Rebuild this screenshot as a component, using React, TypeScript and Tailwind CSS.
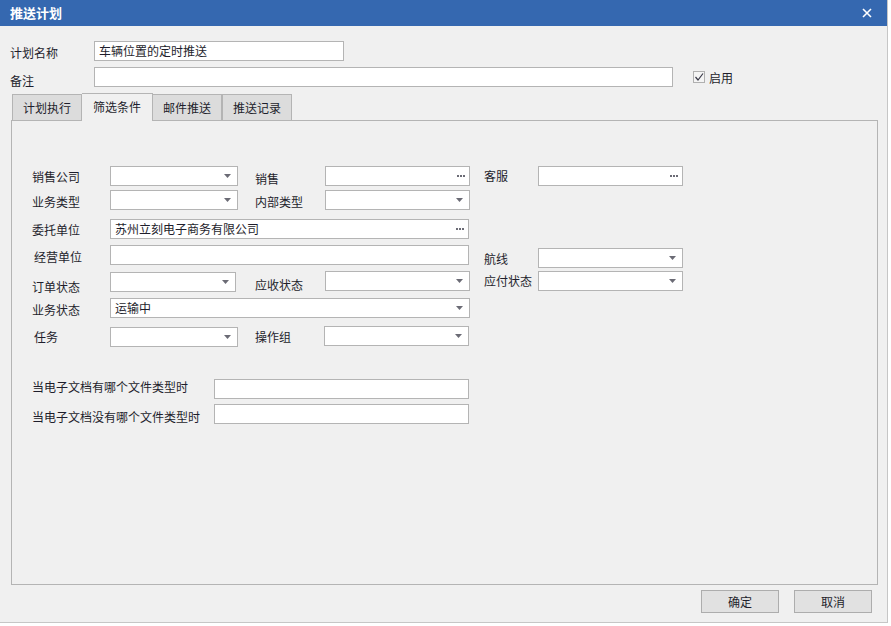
import React from "react";

const FONT = { fontFamily: '"Microsoft YaHei", "Noto Sans CJK SC", "Noto Sans", sans-serif' };

function Arrow() {
  return (
    <svg width="7" height="4" viewBox="0 0 7 4" className="ml-auto mr-[6px] shrink-0">
      <path d="M0 0 H7 L3.5 4 Z" fill="#6b6b75" />
    </svg>
  );
}

function Dots() {
  return (
    <svg width="8" height="2" viewBox="0 0 8 2" className="ml-auto mr-[4px] shrink-0">
      <rect x="0" y="0" width="2" height="2" fill="#6b6b75" />
      <rect x="3" y="0" width="2" height="2" fill="#6b6b75" />
      <rect x="6" y="0" width="2" height="2" fill="#6b6b75" />
    </svg>
  );
}

type BoxProps = { w: string; kind?: "arrow" | "dots" | "none"; text?: string; extra?: string };

function Box({ w, kind = "none", text, extra = "" }: BoxProps) {
  return (
    <div
      className={`${w} h-[20px] bg-white border border-[#b4b4b4] flex items-center shrink-0 ${extra}`}
    >
      {text ? (
        <span className="pl-[4px] text-[12px] leading-[16px] text-[#1e1e2c] whitespace-nowrap">{text}</span>
      ) : null}
      {kind === "arrow" ? <Arrow /> : kind === "dots" ? <Dots /> : null}
    </div>
  );
}

function L({ w, children, extra = "" }: { w: string; children: React.ReactNode; extra?: string }) {
  return (
    <div className={`${w} shrink-0 text-[12px] leading-[16px] text-[#1e1e2c] whitespace-nowrap ${extra}`}>
      {children}
    </div>
  );
}

export default function App() {
  return (
    <div className="w-[891px] h-[626px] bg-white" style={FONT}>
      <div className="w-[888px] h-[623px] bg-[#f0f0f0] border-r border-b border-[#c6c6c6] flex flex-col">
        {/* Title bar */}
        <div className="h-[26px] bg-[#3568b0] flex items-center justify-between pl-[10px] pr-[15px] shrink-0">
          <span className="text-white text-[13px] font-bold leading-[16px]">推送计划</span>
          <svg width="10" height="10" viewBox="0 0 10 10">
            <path d="M1 1 L9 9 M9 1 L1 9" stroke="white" strokeWidth="1.6" />
          </svg>
        </div>

        {/* Row 1 */}
        <div className="flex mt-[15px] h-[20px] pl-[10px]">
          <L w="w-[84px]" extra="mt-[4px]">计划名称</L>
          <Box w="w-[250px]" text="车辆位置的定时推送" />
        </div>

        {/* Row 2 */}
        <div className="flex mt-[6px] h-[20px] pl-[10px]">
          <L w="w-[84px]" extra="mt-[6px]">备注</L>
          <Box w="w-[579px]" />
          <div className="ml-[20px] mt-[4px] w-[12px] h-[12px] border border-[#b0b0b0] bg-[#f4f4f4] flex items-center justify-center">
            <svg width="10" height="10" viewBox="0 0 10 10">
              <path d="M1.5 5 L4 8 L9 1.5" stroke="#3a3a48" strokeWidth="1.2" fill="none" />
            </svg>
          </div>
          <L w="w-auto" extra="ml-[4px] mt-[3px]">启用</L>
        </div>

        {/* Tabs */}
        <div className="flex items-end mt-[6px] h-[27px] pl-[12px] relative z-10">
          <div className="w-[70px] h-[26px] bg-[#dcdcdc] border border-b-0 border-[#b4b4b4] flex items-center justify-center text-[12px] text-[#1e1e2c]">
            计划执行
          </div>
          <div className="w-[71px] h-[28px] -mb-[1px] bg-[#f0f0f0] border border-b-0 border-l-0 border-[#b4b4b4] flex items-center justify-center text-[12px] text-[#1e1e2c] pb-[1px]">
            筛选条件
          </div>
          <div className="w-[69px] h-[26px] bg-[#dcdcdc] border border-b-0 border-l-0 border-[#b4b4b4] flex items-center justify-center text-[12px] text-[#1e1e2c]">
            邮件推送
          </div>
          <div className="w-[70px] h-[26px] bg-[#dcdcdc] border border-b-0 border-[#b4b4b4] flex items-center justify-center text-[12px] text-[#1e1e2c]">
            推送记录
          </div>
        </div>

        {/* Panel */}
        <div className="ml-[11px] w-[867px] h-[465px] border border-[#b4b4b4] bg-[#f0f0f0] pt-[45px] pl-[20px] flex flex-col shrink-0">
          {/* Row A */}
          <div className="flex h-[24px]">
            <L w="w-[78px]" extra="mt-[3px]">销售公司</L>
            <div className="w-[145px] shrink-0"><Box w="w-[128px]" kind="arrow" /></div>
            <L w="w-[70px]" extra="mt-[5px]">销售</L>
            <div className="w-[159px] shrink-0"><Box w="w-[145px]" kind="dots" /></div>
            <L w="w-[54px]" extra="mt-[2px]">客服</L>
            <Box w="w-[145px]" kind="dots" />
          </div>
          {/* Row B */}
          <div className="flex h-[29px]">
            <L w="w-[78px]" extra="mt-[4px]">业务类型</L>
            <div className="w-[145px] shrink-0"><Box w="w-[128px]" kind="arrow" /></div>
            <L w="w-[70px]" extra="mt-[4px]">内部类型</L>
            <div className="w-[159px] shrink-0"><Box w="w-[145px]" kind="arrow" /></div>
          </div>
          {/* Row C */}
          <div className="flex h-[26px]">
            <L w="w-[78px]" extra="mt-[3px]">委托单位</L>
            <Box w="w-[359px]" kind="dots" text="苏州立刻电子商务有限公司" />
          </div>
          {/* Row D */}
          <div className="flex h-[26px]">
            <L w="w-[78px]" extra="mt-[4px] pl-[2px]">经营单位</L>
            <div className="w-[374px] shrink-0"><Box w="w-[359px]" /></div>
            <L w="w-[54px]" extra="mt-[6px]">航线</L>
            <Box w="w-[145px]" kind="arrow" extra="mt-[3px]" />
          </div>
          {/* Row E */}
          <div className="flex h-[27px]">
            <L w="w-[78px]" extra="mt-[8px]">订单状态</L>
            <div className="w-[145px] shrink-0"><Box w="w-[126px]" kind="arrow" extra="mt-[1px]" /></div>
            <L w="w-[70px]" extra="mt-[6px]">应收状态</L>
            <div className="w-[159px] shrink-0"><Box w="w-[145px]" kind="arrow" /></div>
            <L w="w-[54px]" extra="mt-[2px]">应付状态</L>
            <Box w="w-[145px]" kind="arrow" />
          </div>
          {/* Row F */}
          <div className="flex h-[28px]">
            <L w="w-[78px]" extra="mt-[4px]">业务状态</L>
            <Box w="w-[360px]" kind="arrow" text="运输中" />
          </div>
          {/* Row G */}
          <div className="flex h-[53px]">
            <L w="w-[78px]" extra="mt-[3px] pl-[2px]">任务</L>
            <div className="w-[145px] shrink-0"><Box w="w-[128px]" kind="arrow" extra="mt-[1px]" /></div>
            <L w="w-[69px]" extra="mt-[3px]">操作组</L>
            <Box w="w-[145px]" kind="arrow" />
          </div>
          {/* Row H */}
          <div className="flex h-[25px]">
            <L w="w-[182px]" extra="mt-[0px]">当电子文档有哪个文件类型时</L>
            <Box w="w-[255px]" />
          </div>
          {/* Row I */}
          <div className="flex h-[25px]">
            <L w="w-[182px]" extra="mt-[5px]">当电子文档没有哪个文件类型时</L>
            <Box w="w-[255px]" />
          </div>
        </div>

        {/* Buttons */}
        <div className="flex justify-end gap-[15px] mt-[5px] pr-[15px]">
          <button className="w-[78px] h-[23px] bg-[#e1e1e1] border border-[#adadad] text-[12px] text-[#1e1e2c] flex items-center justify-center">
            确定
          </button>
          <button className="w-[78px] h-[23px] bg-[#e1e1e1] border border-[#adadad] text-[12px] text-[#1e1e2c] flex items-center justify-center">
            取消
          </button>
        </div>
      </div>
    </div>
  );
}
